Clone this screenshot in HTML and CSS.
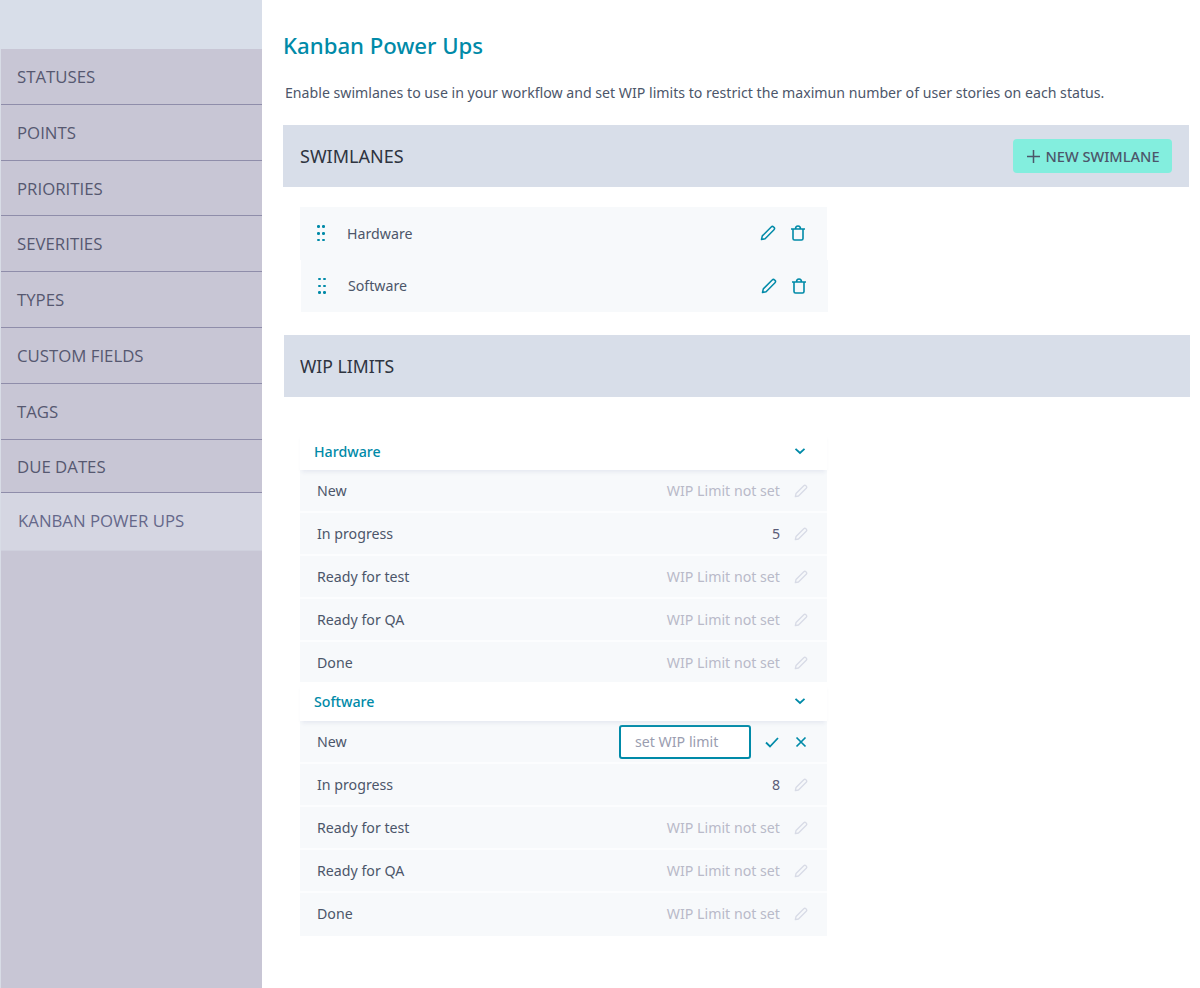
FILE: index.html
```html
<!DOCTYPE html>
<html lang="en">
<head>
<meta charset="UTF-8">
<meta name="viewport" content="width=device-width, initial-scale=1.0">
<title>Kanban Power Ups</title>
<link rel="stylesheet" href="styles.css">
</head>
<body>
<svg class="defs" width="0" height="0">
    <symbol id="pencil" viewBox="0 0 16 16">
        <path d="M1.500 14.500l.8-3.600L11.200 2a1.700 1.700 0 0 1 2.400 0l.4.4a1.700 1.700 0 0 1 0 2.400L5.100 13.700z" fill="none" stroke="currentColor" stroke-width="1.500" stroke-linejoin="round"/>
    </symbol>
    <symbol id="trash" viewBox="0 0 16 16">
        <path d="M1 4h14M3 4v9.500A1.500 1.500 0 0 0 4.500 15h7a1.500 1.500 0 0 0 1.500-1.500V4M5.500 4C5.500 2 6 1 8 1s2.500 1 2.500 3" fill="none" stroke="currentColor" stroke-width="1.600" stroke-linejoin="round"/>
    </symbol>
    <symbol id="chevron" viewBox="0 0 12 8">
        <path d="M1.500 1.800L6 6l4.500-4.200" fill="none" stroke="currentColor" stroke-width="1.800"/>
    </symbol>
</svg>

<div class="layout">
    <aside class="sidebar">
        <div class="sidebar-top"></div>
        <ul class="menu">
            <li>STATUSES</li>
            <li>POINTS</li>
            <li>PRIORITIES</li>
            <li>SEVERITIES</li>
            <li>TYPES</li>
            <li>CUSTOM FIELDS</li>
            <li>TAGS</li>
            <li class="short">DUE DATES</li>
            <li class="active">KANBAN POWER UPS</li>
        </ul>
    </aside>

    <main class="content">
        <h1>Kanban Power Ups</h1>
        <p class="intro">Enable swimlanes to use in your workflow and set WIP limits to restrict the maximun number of user stories on each status.</p>

        <section class="band">
            <h2>SWIMLANES</h2>
            <button class="new-btn">
                <svg class="plus" viewBox="0 0 13 13"><path d="M6.500 0v13M0 6.500h13" fill="none" stroke="currentColor" stroke-width="1.500"/></svg>
                NEW SWIMLANE
            </button>
        </section>

        <div class="swimlanes">
            <div class="lane">
                <span class="dots"><i></i><i></i><i></i><i></i><i></i><i></i></span>
                <span class="lane-name">Hardware</span>
                <svg class="icon"><use href="#pencil"/></svg>
                <svg class="icon"><use href="#trash"/></svg>
            </div>
            <div class="lane lane-shift">
                <span class="dots"><i></i><i></i><i></i><i></i><i></i><i></i></span>
                <span class="lane-name">Software</span>
                <svg class="icon"><use href="#pencil"/></svg>
                <svg class="icon"><use href="#trash"/></svg>
            </div>
        </div>

        <section class="band band-wip">
            <h2>WIP LIMITS</h2>
        </section>

        <div class="limits">
            <div class="group-head">
                <span>Hardware</span>
                <svg class="chevron"><use href="#chevron"/></svg>
            </div>
            <div class="row"><span>New</span><span class="unset">WIP Limit not set</span><svg class="icon-off"><use href="#pencil"/></svg></div>
            <div class="row"><span>In progress</span><span class="value">5</span><svg class="icon-off"><use href="#pencil"/></svg></div>
            <div class="row"><span>Ready for test</span><span class="unset">WIP Limit not set</span><svg class="icon-off"><use href="#pencil"/></svg></div>
            <div class="row"><span>Ready for QA</span><span class="unset">WIP Limit not set</span><svg class="icon-off"><use href="#pencil"/></svg></div>
            <div class="row row-last"><span>Done</span><span class="unset">WIP Limit not set</span><svg class="icon-off"><use href="#pencil"/></svg></div>

            <div class="group-head group-second">
                <span>Software</span>
                <svg class="chevron"><use href="#chevron"/></svg>
            </div>
            <div class="row">
                <span>New</span>
                <input class="wip-input" type="text" placeholder="set WIP limit">
                <svg class="confirm" viewBox="0 0 14 12"><path d="M1 6.500l4 4L13 2" fill="none" stroke="currentColor" stroke-width="1.800"/></svg>
                <svg class="cancel" viewBox="0 0 12 12"><path d="M1.500 1.500l9 9M10.500 1.500l-9 9" fill="none" stroke="currentColor" stroke-width="1.700"/></svg>
            </div>
            <div class="row"><span>In progress</span><span class="value">8</span><svg class="icon-off"><use href="#pencil"/></svg></div>
            <div class="row"><span>Ready for test</span><span class="unset">WIP Limit not set</span><svg class="icon-off"><use href="#pencil"/></svg></div>
            <div class="row"><span>Ready for QA</span><span class="unset">WIP Limit not set</span><svg class="icon-off"><use href="#pencil"/></svg></div>
            <div class="row row-end"><span>Done</span><span class="unset">WIP Limit not set</span><svg class="icon-off"><use href="#pencil"/></svg></div>
        </div>
    </main>
</div>
</body>
</html>
```

FILE: styles.css
```css
* {
    box-sizing: border-box;
}
body {
    margin: 0;
    background-color: #fff;
    color: #4c566a;
    font-family: "Noto Sans", "Open Sans", sans-serif;
    font-size: 14.2px;
}
.defs {
    display: block;
    height: 0;
}
.layout {
    display: flex;
    height: 988px;
    overflow: hidden;
}

/* sidebar */
.sidebar {
    width: 262px;
    flex-shrink: 0;
    background-color: #c8c6d5;
    display: flex;
    flex-direction: column;
}
.sidebar-top {
    height: 49px;
    background-color: #d8dee9;
}
.menu {
    flex: 1;
    list-style: none;
    margin: 0;
    padding: 0;
    border-left: 1px solid #d8dce6;
    font-family: "Open Sans", sans-serif;
    font-size: 16.8px;
    color: #565870;
}
.menu li {
    height: 55.8px;
    padding: 16px 0 0 16px;
    line-height: 24px;
    border-bottom: 1px solid #8f8daa;
}
.menu li.short {
    height: 53.2px;
    padding-top: 15px;
}
.menu li.active {
    height: 58px;
    padding: 16px 0 0 17px;
    background-color: #d5d6e2;
    border-bottom: 1px solid #cfd0dd;
    color: #65688a;
}

/* main column */
.content {
    flex: 1;
    padding: 0 11px 0 21px;
}
h1 {
    margin: 31px 0 0 0;
    font-size: 22.2px;
    line-height: 30px;
    font-weight: 500;
    color: #008aa8;
}
.intro {
    margin: 22px 0 0 2px;
    line-height: 20px;
    font-size: 14.15px;
}
.band {
    height: 62px;
    margin-top: 22px;
    padding: 0 17px;
    background-color: #d8dee9;
    display: flex;
    align-items: center;
    justify-content: space-between;
}
.band h2 {
    margin: 0;
    font-size: 18px;
    font-weight: 400;
    color: #2e3440;
}
.band-wip {
    margin: 23px -1px 0 1px;
    padding-left: 16px;
}
.band-wip h2 {
    font-size: 17.6px;
}
.new-btn {
    width: 159px;
    height: 34px;
    background-color: #83eede;
    color: #4c566a;
    border: none;
    border-radius: 4px;
    font-family: inherit;
    font-size: 14.6px;
    font-weight: 500;
    padding: 0 0 0 2px;
    display: flex;
    align-items: center;
    justify-content: center;
    gap: 5px;
}
.plus {
    width: 13px;
    height: 13px;
}

/* swimlane list */
.swimlanes {
    margin: 20px 0 0 17px;
}
.lane {
    width: 527px;
    height: 52.5px;
    background-color: #f7f9fb;
    display: flex;
    align-items: center;
    padding: 0 21px 0 17px;
    color: #4c566a;
}
.lane-shift {
    margin-left: 1px;
}
.dots {
    width: 8px;
    display: grid;
    grid-template-columns: 2.5px 2.5px;
    column-gap: 2.5px;
    row-gap: 4.2px;
    margin-right: 22px;
}
.dots i {
    width: 2.5px;
    height: 2.5px;
    background-color: #008aa8;
    border-radius: 50%;
}
.lane-name {
    flex: 1;
}
.icon {
    width: 16px;
    height: 16px;
    color: #008aa8;
    margin-left: 14px;
}

/* wip limits */
.limits {
    width: 527px;
    margin: 35px 0 0 17px;
}
.group-head {
    height: 38px;
    padding: 0 21px 0 14px;
    display: flex;
    align-items: center;
    justify-content: space-between;
    color: #008aa8;
    font-weight: 500;
    box-shadow: 0 4px 4px -2px rgba(216, 222, 233, 0.6);
    position: relative;
}
.group-second {
    height: 39px;
    padding-bottom: 1px;
}
.chevron {
    width: 12px;
    height: 8px;
    color: #008aa8;
}
.row {
    height: 43px;
    padding: 0 19px 0 17px;
    background-color: #f7f9fb;
    border-bottom: 2px solid #fcfdfe;
    display: flex;
    align-items: center;
    gap: 14px;
}
.row-last {
    height: 40px;
    padding-top: 1px;
    border-bottom: 0;
}
.row-end {
    padding-bottom: 2px;
    border-bottom: 0;
}
.row > span:first-child {
    flex: 1;
}
.unset {
    color: #b9bac9;
}
.value {
    color: #5b5d78;
}
.icon-off {
    width: 14px;
    height: 14px;
    color: #d8dbe6;
}
.wip-input {
    width: 132px;
    height: 34px;
    border: 2px solid #008aa8;
    border-radius: 3px;
    padding: 0 14px;
    font-family: inherit;
    font-size: 14.2px;
    background-color: #fff;
}
.wip-input::placeholder {
    color: #9a9db0;
}
.confirm {
    width: 14px;
    height: 12px;
    color: #008aa8;
}
.cancel {
    width: 12px;
    height: 12px;
    color: #008aa8;
    margin: 0 1px 0 2px;
}
```
